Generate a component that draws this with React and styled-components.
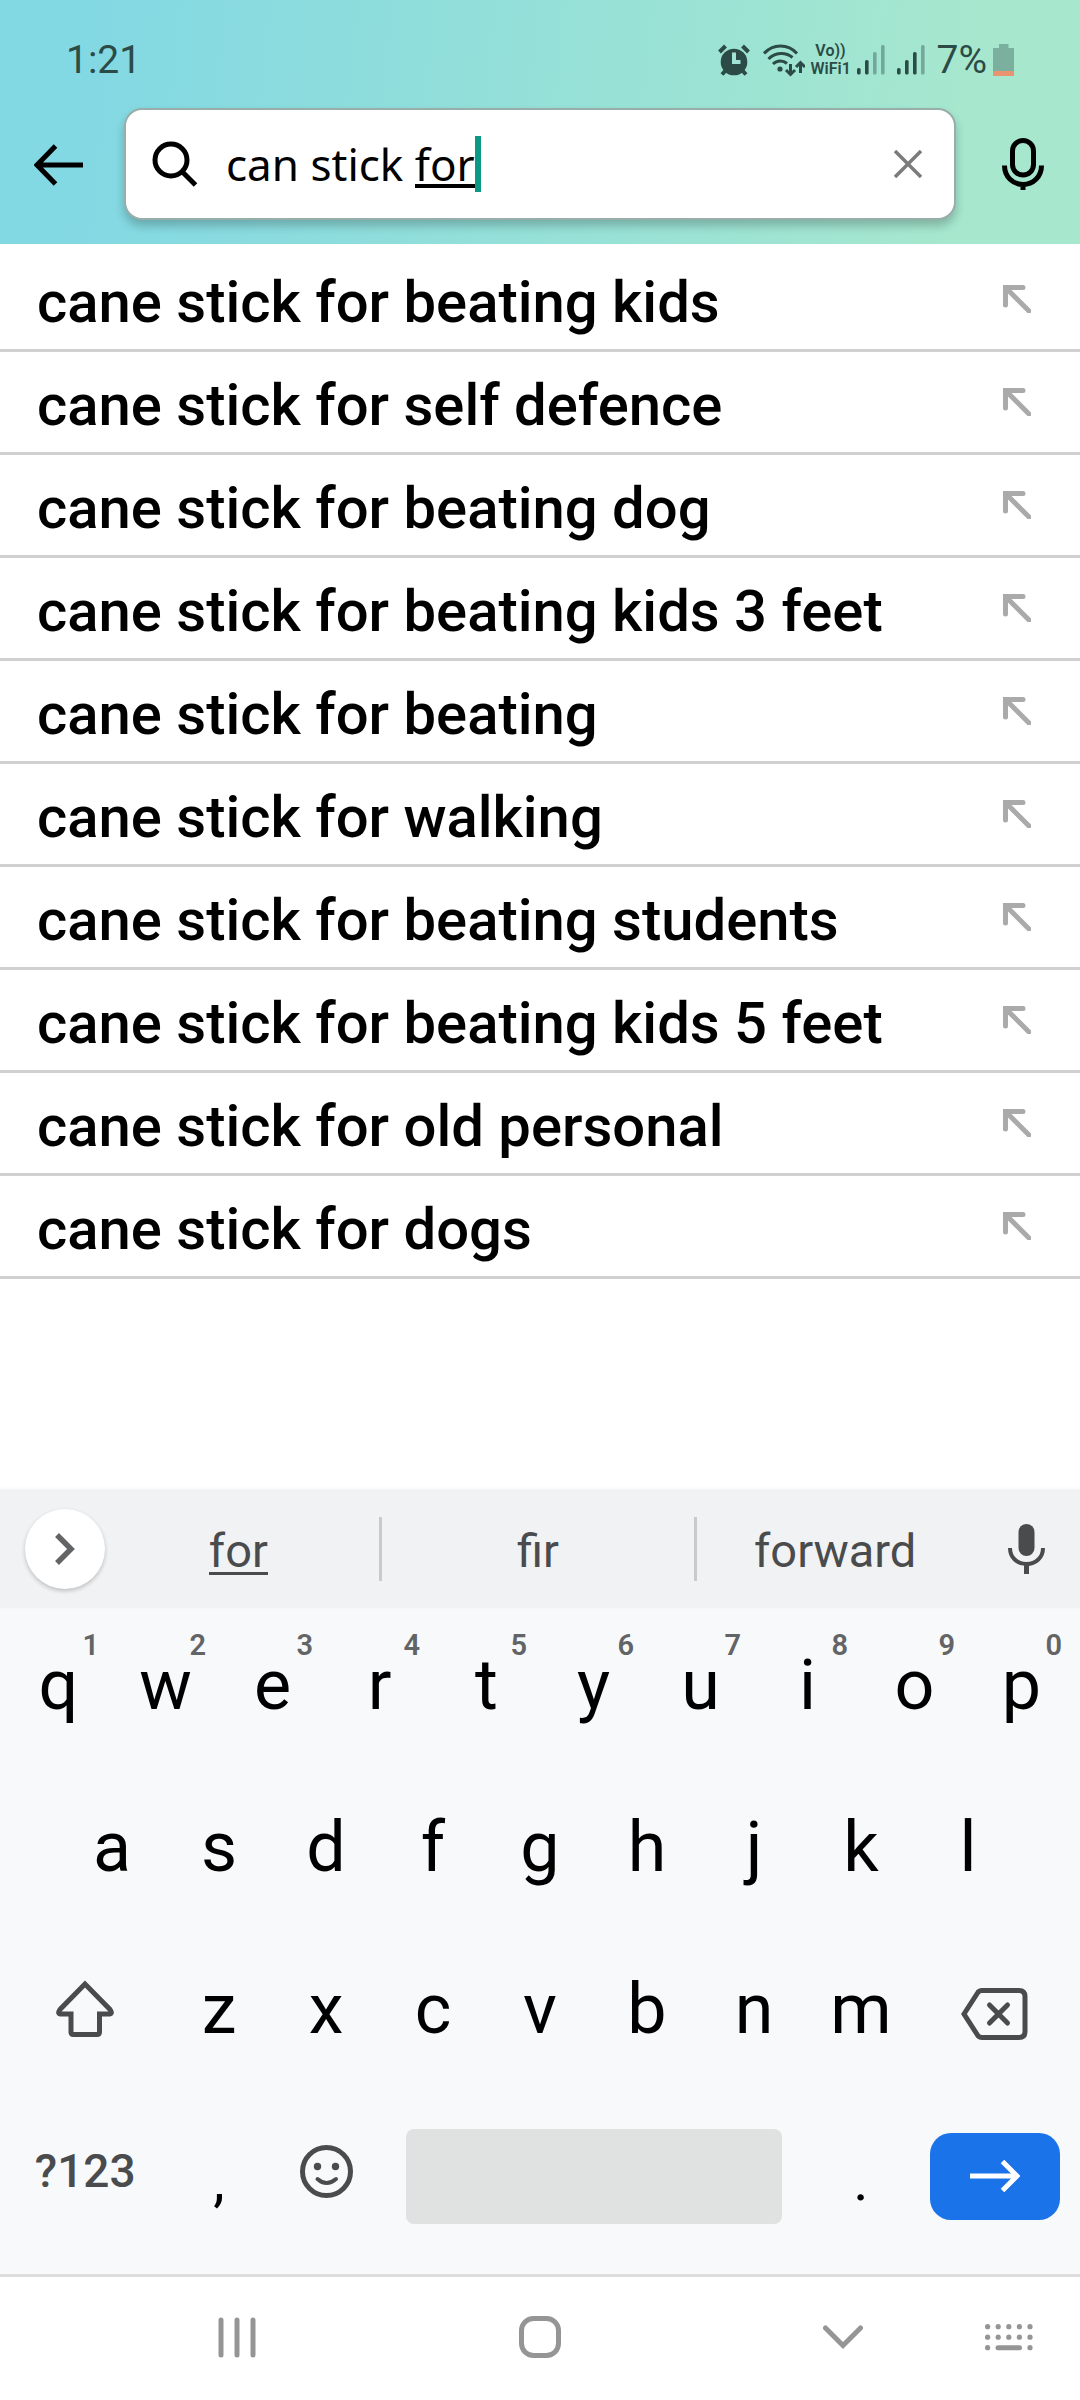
import { useState } from "react";
import styled, { createGlobalStyle } from "styled-components";

const GlobalStyle = createGlobalStyle`
  * {
    box-sizing: border-box;
  }
  body {
    margin: 0;
    background: #fff;
    font-family: Roboto, "Liberation Sans", sans-serif;
  }
  button {
    padding: 0;
    border: none;
    background: none;
    color: inherit;
    font: inherit;
    cursor: pointer;
  }
  svg {
    display: block;
    flex: none;
  }
`;

const Screen = styled.div`
  display: flex;
  flex-direction: column;
  min-height: 100vh;
`;

const Header = styled.header`
  padding-bottom: 24px;
  background: linear-gradient(96deg, #82d8e3 8%, #a6e7ce 88%);
`;
const StatusBar = styled.div`
  display: flex;
  align-items: center;
  justify-content: space-between;
  height: 108px;
  padding: 12px 66px 0;
  color: #2c4b46;
  font-size: 39px;
`;
const StatusIcons = styled.div`
  display: flex;
  align-items: center;
  gap: 6px;
`;
const Carrier = styled.span`
  width: 40px;
  font-size: 16px;
  line-height: 18px;
  font-weight: 600;
  text-align: center;
  white-space: nowrap;
`;

const SearchRow = styled.form`
  display: flex;
  align-items: center;
  height: 112px;
`;
const BarButton = styled.button`
  display: flex;
  flex: none;
  align-items: center;
  justify-content: center;
  width: 124px;
  height: 100%;
  padding: ${(props) => (props.$end ? "0 0 0 10px" : "2px 6px 0 0")};
`;
const SearchBox = styled.div`
  display: flex;
  flex: 1;
  align-items: center;
  height: 112px;
  padding: 0 32px 0 26px;
  border: 2px solid #98aeab;
  border-radius: 18px;
  background: #fff;
  box-shadow: 0 6px 10px rgba(0, 0, 0, 0.22);
`;
const Field = styled.label`
  position: relative;
  display: flex;
  flex: 1;
  align-items: center;
  margin-left: 28px;
`;
const Typed = styled.span`
  position: relative;
  display: flex;
`;
const Input = styled.input`
  field-sizing: content;
  padding: 0;
  border: none;
  outline: none;
  background: none;
  font-family: "Noto Sans", "Open Sans", sans-serif;
  font-size: 44px;
  line-height: 56px;
`;
/* marks the word that the keyboard is still composing */
const Composing = styled.span`
  position: absolute;
  right: 0;
  bottom: 4px;
  width: 60px;
  height: 4px;
  background: #000;
`;
const Caret = styled.span`
  width: 6px;
  height: 56px;
  background: #0b9884;
`;

const List = styled.ul`
  flex: 1;
  margin: 0;
  padding: 5px 0 0;
  list-style: none;
`;
const Row = styled.li`
  display: flex;
  align-items: center;
  justify-content: space-between;
  height: 103px;
  padding: 0 49px 0 37px;
  border-bottom: 3px solid #d0d0d0;
`;
const RowText = styled.button`
  flex: 1;
  padding-top: 6px;
  color: #000;
  font-size: 58px;
  font-weight: 500;
  text-align: left;
  white-space: nowrap;
`;

const Keyboard = styled.section`
  background: #f8f9fb;
`;
const Strip = styled.div`
  display: grid;
  grid-template-columns: 98px 284fr 316fr 276fr 107px;
  align-items: center;
  height: 118px;
  background: #f1f2f4;
  box-shadow: 0 -1px 3px rgba(0, 0, 0, 0.06);
  color: #4a4b4d;
`;
const Expand = styled.button`
  display: flex;
  align-items: center;
  justify-content: center;
  width: 80px;
  height: 80px;
  margin-left: 25px;
  border-radius: 50%;
  background: #fff;
  box-shadow: 0 2px 4px rgba(0, 0, 0, 0.22);
`;
const Word = styled.button`
  height: 64px;
  padding-top: 3px;
  border-right: ${(props) => (props.$last ? "none" : "3px solid #c9cacc")};
  font-size: 47px;
`;
const Underlined = styled.span`
  display: inline-block;
  border-bottom: 3px solid #4a4b4d;
  line-height: 42px;
`;
const StripMic = styled.button`
  display: flex;
  justify-content: center;
`;

const Keys = styled.div`
  padding: 1px 5px 17px;
`;
/* a letter key is two of the twenty columns wide */
const KeyRow = styled.div`
  display: grid;
  grid-template-columns: repeat(20, minmax(0, 1fr));
  align-items: center;
  height: 162px;
`;
const Key = styled.button`
  position: relative;
  display: flex;
  grid-column-end: span ${(props) => props.$span || 2};
  align-items: center;
  justify-content: center;
  height: 162px;
  padding-bottom: ${(props) => (props.$low ? 0 : 10)}px;
  color: ${(props) => (props.$tool ? "#4a4b4d" : "#000")};
  font-size: ${(props) => (props.$tool ? 46 : 70)}px;
  font-weight: ${(props) => (props.$tool ? 500 : 400)};
`;
const InsetKey = styled(Key)`
  &:first-child {
    grid-column-start: 2;
  }
`;
const PunctuationKey = styled(Key)`
  padding: 8px 0 0;
  font-size: 58px;
`;
const Hint = styled.span`
  position: absolute;
  top: 22px;
  right: 13px;
  color: #636466;
  font-size: 29px;
  line-height: 29px;
  font-weight: 600;
`;
const Space = styled.button`
  grid-column-end: span 8;
  height: 95px;
  margin: 0 26px;
  border-radius: 8px;
  background: #e0e2e1;
`;
const Enter = styled.button`
  display: flex;
  grid-column-end: span 3;
  align-items: center;
  justify-content: center;
  height: 87px;
  margin: 0 15px;
  border-radius: 21px;
  background: #1a73e8;
`;

const SystemNav = styled.nav`
  display: grid;
  grid-template-columns: 86px 1fr 1fr 1fr 86px;
  align-items: center;
  height: 126px;
  padding-bottom: 3px;
  border-top: 3px solid #dedede;
  background: #fff;
`;
const NavButton = styled.button`
  grid-row: 1;
  grid-column: ${(props) => props.$column};
  justify-self: center;
`;
const SwitchKeyboard = styled(NavButton)`
  justify-self: end;
  margin-right: 47px;
`;

const AlarmIcon = () => (
  <svg width="39" height="32" viewBox="0 0 39 32" fill="none" stroke="#2c4b46">
    <circle cx="16" cy="18" r="13.3" fill="#2c4b46" stroke="none" />
    <path d="M1.5 8 7.5 2M24.5 2l6 6" strokeWidth="4" />
    <path d="M8 26 4 30.5M24 26l4 4.5" strokeWidth="4" />
    <path d="M16 8.5V18h6.500" stroke="#9fe4d5" strokeWidth="4" />
  </svg>
);

const WifiIcon = () => (
  <svg width="42" height="33" viewBox="0 0 42 33" fill="none" stroke="#2c4b46" strokeWidth="3">
    <path d="M1 9.5C10-.5 25-.5 34 9.5M5.5 15C12 8 23 8 29.5 13.5M10 20C14 16 20 16 24 19.5" />
    <circle cx="17" cy="25" r="2.6" fill="#2c4b46" stroke="none" />
    <path d="M27.5 20V30M23 26l4.500 4.500L32 26M37.5 29V19M33 23l4.500-4.500L42 23" />
  </svg>
);

const SignalIcon = ({ level }) => (
  <svg width="34" height="30" viewBox="0 0 34 30" fill="#2c4b46">
    {[23, 15, 7, 0].map((top, i) => (
      <rect
        key={top}
        x={i * 8}
        y={top}
        width="3.6"
        height={29.5 - top}
        rx="1.5"
        opacity={i < level ? 1 : 0.4}
      />
    ))}
  </svg>
);

const BatteryIcon = () => (
  <svg width="21" height="32" viewBox="0 0 21 32">
    <path d="M6 0h9.500v4H21v23H0V4h6z" fill="#7cb09e" />
    <path d="M0 27h21v5H0z" fill="#ea9370" />
  </svg>
);

const BackIcon = () => (
  <svg width="50" height="42" viewBox="0 0 50 42" fill="none" stroke="#000" strokeWidth="5">
    <path d="M49 21H4M21.5 2 3 21l18.500 19" />
  </svg>
);

const SearchIcon = () => (
  <svg width="46" height="46" viewBox="0 0 46 46" fill="none" stroke="#000">
    <circle cx="19" cy="19" r="16" strokeWidth="5" />
    <path d="M31 31.5 43.5 44" strokeWidth="5" />
  </svg>
);

const ClearIcon = () => (
  <svg width="28" height="28" viewBox="0 0 28 28" stroke="#7b7b7b" strokeWidth="3.5">
    <path d="M1 1 27 27M27 1 1 27" />
  </svg>
);

const MicOutlineIcon = () => (
  <svg width="42" height="52" viewBox="0 0 42 52" fill="none" stroke="#000" strokeWidth="5">
    <rect x="10.5" y="2.5" width="21" height="34.5" rx="10.5" />
    <path d="M2.5 27.5C2.5 39 11 46.5 21 46.5S39.5 39 39.5 27.5M21 46v6" />
  </svg>
);

const FillArrowIcon = () => (
  <svg width="28" height="28" viewBox="0 0 28 28" fill="none" stroke="#aaa" strokeWidth="5" strokeLinecap="round">
    <path d="M20 2.5H2.5V20M3 3 26 26" />
  </svg>
);

const ChevronIcon = () => (
  <svg width="20" height="32" viewBox="0 0 20 32" fill="none" stroke="#636466" strokeWidth="5.5">
    <path d="M2 2 16 16 2 30" />
  </svg>
);

const MicIcon = () => (
  <svg width="37" height="50" viewBox="0 0 37 50" fill="none" stroke="#4a4b4d">
    <rect x="10.5" y="0" width="16" height="32" rx="8" fill="#4a4b4d" stroke="none" />
    <path d="M2 24C2 33.5 9 40 18.5 40S35 33.5 35 24" strokeWidth="4" />
    <path d="M18.5 40V50" strokeWidth="5" />
  </svg>
);

const ShiftIcon = () => (
  <svg width="58" height="58" viewBox="0 0 58 58" fill="none" stroke="#4a4b4d" strokeWidth="5">
    <path d="M29 4 4 29.5Q.5 34 6 34H15V52Q15 54.5 17.5 54.5H41Q43.5 54.5 43.5 52V34H52Q57.5 34 54 29.5Z" />
  </svg>
);

const BackspaceIcon = () => (
  <svg width="67" height="52" viewBox="0 0 67 52" fill="none" stroke="#4a4b4d" strokeWidth="5">
    <path d="M3 26 16.5 5Q18 2.5 21 2.5H58Q64 2.5 64 8.5V43.5Q64 49.5 58 49.5H21Q18 49.5 16.5 47Z" />
    <path d="M28.5 17 46.5 35M46.5 17 28.5 35" strokeLinecap="round" />
  </svg>
);

const EmojiIcon = () => (
  <svg width="53" height="53" viewBox="0 0 53 53" fill="none" stroke="#4a4b4d" strokeWidth="5">
    <circle cx="26.5" cy="26.5" r="24" />
    <path d="M17.5 34Q26.5 42 36 34" strokeWidth="4" strokeLinecap="round" />
    <circle cx="17.5" cy="21.5" r="3.7" fill="#4a4b4d" stroke="none" />
    <circle cx="35.5" cy="21.5" r="3.7" fill="#4a4b4d" stroke="none" />
  </svg>
);

const EnterIcon = () => (
  <svg width="50" height="32" viewBox="0 0 50 32" fill="none" stroke="#fff" strokeWidth="5">
    <path d="M0 16H46M32.5 1.5 47 16 32.5 30.5" />
  </svg>
);

const RecentsIcon = () => (
  <svg width="38" height="41" viewBox="0 0 38 41" stroke="#959595" strokeWidth="5" strokeLinecap="round">
    <path d="M3 3V38M19 3V38M35 3V38" />
  </svg>
);

const HomeIcon = () => (
  <svg width="42" height="42" viewBox="0 0 42 42" fill="none" stroke="#959595" strokeWidth="5">
    <rect x="2.5" y="2.5" width="37" height="37" rx="12" />
  </svg>
);

const HideIcon = () => (
  <svg width="40" height="24" viewBox="0 0 40 24" fill="none" stroke="#959595" strokeWidth="5" strokeLinecap="round">
    <path d="M2.5 3 20 20.5 37.5 3" />
  </svg>
);

const KeyboardIcon = () => (
  <svg width="48" height="27" viewBox="0 0 48 27" fill="#959595">
    {[0, 1, 2, 3, 4].map((i) => (
      <g key={i}>
        <circle cx={2.6 + i * 10.6} cy="2.7" r="2.6" />
        <circle cx={2.6 + i * 10.6} cy="13.2" r="2.6" />
      </g>
    ))}
    <circle cx="2.6" cy="23.7" r="2.6" />
    <circle cx="45" cy="23.7" r="2.6" />
    <rect x="10.5" y="21.2" width="26.5" height="5" rx="2.5" />
  </svg>
);

const suggestions = [
  "cane stick for beating kids",
  "cane stick for self defence",
  "cane stick for beating dog",
  "cane stick for beating kids 3 feet",
  "cane stick for beating",
  "cane stick for walking",
  "cane stick for beating students",
  "cane stick for beating kids 5 feet",
  "cane stick for old personal",
  "cane stick for dogs",
];

const App = () => {
  const [query, setQuery] = useState("can stick for");

  return (
    <Screen>
      <GlobalStyle />
      <Header>
        <StatusBar>
          <span>1:21</span>
          <StatusIcons>
            <AlarmIcon />
            <WifiIcon />
            <Carrier>
              Vo))
              <br />
              WiFi1
            </Carrier>
            <SignalIcon level={2} />
            <SignalIcon level={3} />
            <span>7%</span>
            <BatteryIcon />
          </StatusIcons>
        </StatusBar>
        <SearchRow onSubmit={(e) => e.preventDefault()}>
          <BarButton type="button" aria-label="Back">
            <BackIcon />
          </BarButton>
          <SearchBox>
            <SearchIcon />
            <Field>
              <Typed>
                <Input
                  aria-label="Search"
                  value={query}
                  onChange={(e) => setQuery(e.target.value)}
                />
                <Composing />
              </Typed>
              <Caret />
            </Field>
            <button type="button" aria-label="Clear" onClick={() => setQuery("")}>
              <ClearIcon />
            </button>
          </SearchBox>
          <BarButton type="button" $end aria-label="Voice search">
            <MicOutlineIcon />
          </BarButton>
        </SearchRow>
      </Header>

      <List>
        {suggestions.map((item) => (
          <Row key={item}>
            <RowText>{item}</RowText>
            <button aria-label={`Fill in ${item}`} onClick={() => setQuery(item)}>
              <FillArrowIcon />
            </button>
          </Row>
        ))}
      </List>

      <Keyboard>
        <Strip>
          <Expand aria-label="More tools">
            <ChevronIcon />
          </Expand>
          <Word>
            <Underlined>for</Underlined>
          </Word>
          <Word>fir</Word>
          <Word $last>forward</Word>
          <StripMic aria-label="Dictate">
            <MicIcon />
          </StripMic>
        </Strip>
        <Keys>
          <KeyRow>
            {"qwertyuiop".split("").map((letter, i) => (
              <Key key={letter}>
                {letter}
                <Hint>{(i + 1) % 10}</Hint>
              </Key>
            ))}
          </KeyRow>
          <KeyRow>
            {"asdfghjkl".split("").map((letter) => (
              <InsetKey key={letter}>{letter}</InsetKey>
            ))}
          </KeyRow>
          <KeyRow>
            <Key $span={3} aria-label="Shift">
              <ShiftIcon />
            </Key>
            {"zxcvbnm".split("").map((letter) => (
              <Key key={letter}>{letter}</Key>
            ))}
            <Key $span={3} $low aria-label="Backspace">
              <BackspaceIcon />
            </Key>
          </KeyRow>
          <KeyRow>
            <Key $span={3} $tool>
              ?123
            </Key>
            <PunctuationKey>,</PunctuationKey>
            <Key aria-label="Emoji">
              <EmojiIcon />
            </Key>
            <Space aria-label="Space" />
            <PunctuationKey>.</PunctuationKey>
            <Enter aria-label="Search">
              <EnterIcon />
            </Enter>
          </KeyRow>
        </Keys>
      </Keyboard>

      <SystemNav>
        <NavButton $column="2" aria-label="Recent apps">
          <RecentsIcon />
        </NavButton>
        <NavButton $column="3" aria-label="Home">
          <HomeIcon />
        </NavButton>
        <NavButton $column="4" aria-label="Hide keyboard">
          <HideIcon />
        </NavButton>
        <SwitchKeyboard $column="4 / 6" aria-label="Switch keyboard">
          <KeyboardIcon />
        </SwitchKeyboard>
      </SystemNav>
    </Screen>
  );
};

export default App;
